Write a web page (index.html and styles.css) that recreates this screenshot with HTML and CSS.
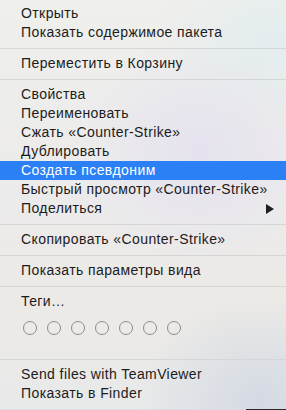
FILE: index.html
```html
<!DOCTYPE html>
<html lang="ru">
<head>
<meta charset="utf-8">
<link rel="stylesheet" href="styles.css">
</head>
<body>
<div class="menu">
  <div class="item">Открыть</div>
  <div class="item">Показать содержимое пакета</div>
  <div class="sep"></div>
  <div class="item">Переместить в Корзину</div>
  <div class="sep"></div>
  <div class="item">Свойства</div>
  <div class="item">Переименовать</div>
  <div class="item">Сжать «Counter-Strike»</div>
  <div class="item">Дублировать</div>
  <div class="item active">Создать псевдоним</div>
  <div class="item">Быстрый просмотр «Counter-Strike»</div>
  <div class="item sub">Поделиться<span class="arrow"></span></div>
  <div class="sep"></div>
  <div class="item">Скопировать «Counter-Strike»</div>
  <div class="sep"></div>
  <div class="item">Показать параметры вида</div>
  <div class="sep"></div>
  <div class="item">Теги…</div>
  <div class="tags">
    <span class="dot"></span><span class="dot"></span><span class="dot"></span><span class="dot"></span><span class="dot"></span><span class="dot"></span><span class="dot"></span>
  </div>
  <div class="sep"></div>
  <div class="item">Send files with TeamViewer</div>
  <div class="item">Показать в Finder</div>
</div>
</body>
</html>
```
FILE: styles.css
```css
html, body {
  margin: 0;
  padding: 0;
  background: linear-gradient(90deg, #dadcdf 0, #dadcdf 246px, #2a2a2c 246px);
}
.menu {
  width: 286px;
  height: 409px;
  box-sizing: border-box;
  padding: 4px 0 6px;
  background:
    radial-gradient(ellipse 160px 120px at 270px 40px, rgba(220,236,240,0.6), rgba(220,236,240,0) 70%),
    radial-gradient(ellipse 180px 160px at 200px 150px, rgba(226,222,240,0.7), rgba(226,222,240,0) 70%),
    radial-gradient(ellipse 160px 140px at 260px 400px, rgba(210,216,226,0.9), rgba(210,216,226,0) 75%),
    linear-gradient(180deg, #efefec 0%, #ecebeb 50%, #eceae6 75%, #e8e9ea 100%);
  font-family: "Liberation Sans", Arial, sans-serif;
  font-size: 14px;
  letter-spacing: 0.4px;
  color: #1c1c1c;
}
.item {
  height: 19px;
  line-height: 19px;
  padding: 0 12px 0 21px;
  display: flex;
  align-items: center;
  justify-content: space-between;
  white-space: nowrap;
}
.item.active {
  background: #2c80f5;
  color: #ffffff;
}
.arrow {
  width: 0;
  height: 0;
  border-left: 8px solid #1e1e1e;
  border-top: 5px solid transparent;
  border-bottom: 5px solid transparent;
}
.sep {
  height: 1px;
  margin: 6px 0 5px;
  background: #d6d6d6;
}
.tags {
  height: 42px;
  box-sizing: border-box;
  padding: 10px 0 0 23px;
  display: flex;
  gap: 10px;
  align-items: flex-start;
}
.dot {
  width: 14px;
  height: 14px;
  box-sizing: border-box;
  border: 1px solid #8c8c8c;
  border-radius: 50%;
}
```
